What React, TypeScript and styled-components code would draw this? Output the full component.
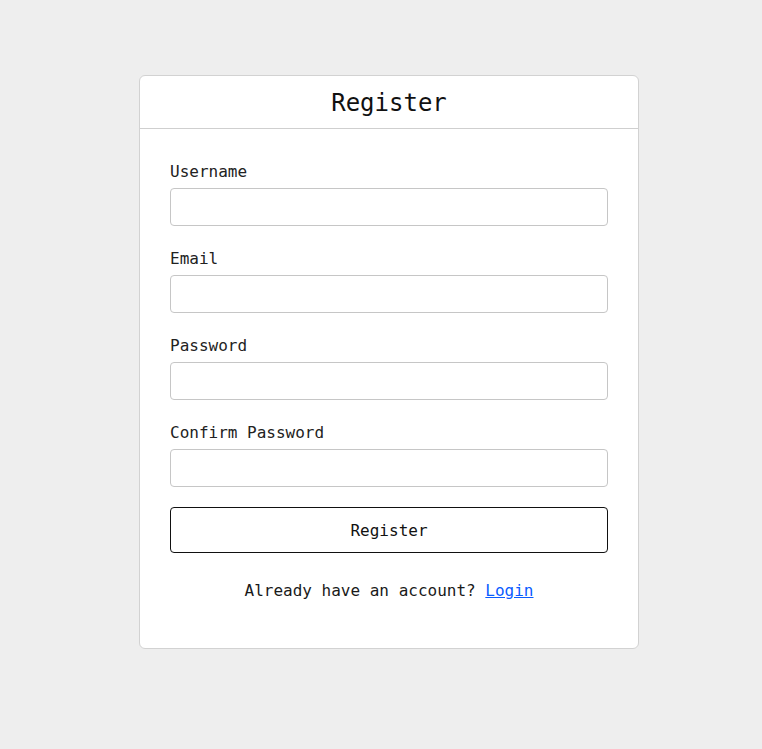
import React from "react";
import styled, { createGlobalStyle } from "styled-components";

const Global = createGlobalStyle`
  html, body { margin: 0; padding: 0; background: #eeeeee; }
  body { font-family: "DejaVu Sans Mono", "Liberation Mono", monospace; color: #1a1a1a; }
  * { box-sizing: border-box; }
`;

const Page = styled.div`
  min-height: 749px;
  display: flex;
  justify-content: center;
  align-items: flex-start;
  padding: 75px 0 0 16px;
`;

const Card = styled.div`
  width: 500px;
  background: #ffffff;
  border: 1px solid #d2d2d2;
  border-radius: 6px;
`;

const Header = styled.div`
  height: 53px;
  padding-top: 2px;
  border-bottom: 1px solid #cfcfcf;
  display: flex;
  align-items: center;
  justify-content: center;
`;

const Title = styled.h1`
  margin: 0;
  font-size: 24px;
  font-weight: 400;
  color: #111;
`;

const Body = styled.form`
  padding: 30px 30px 45px;
  display: flex;
  flex-direction: column;
`;

const Field = styled.div`
  display: flex;
  flex-direction: column;
  margin-bottom: 20px;
`;

const Label = styled.label`
  font-size: 16px;
  line-height: 24px;
  padding-top: 1px;
  color: #222;
  margin-bottom: 4px;
`;

const Input = styled.input`
  height: 38px;
  width: 100%;
  border: 1px solid #c6c6c6;
  border-radius: 4px;
  background: #fff;
  font-family: inherit;
  font-size: 16px;
  padding: 0 10px;
  outline: none;
`;

const Button = styled.button`
  height: 46px;
  width: 100%;
  background: #fff;
  border: 1px solid #111;
  border-radius: 4px;
  font-family: inherit;
  font-size: 16px;
  color: #111;
  cursor: pointer;
`;

const Footer = styled.p`
  margin: 26px 0 0;
  text-align: center;
  font-size: 16px;
  line-height: 24px;
  color: #1a1a1a;
`;

const Link = styled.a`
  color: #0a5cff;
  text-decoration: underline;
`;

const fields = ["Username", "Email", "Password", "Confirm Password"];

export default function App() {
  return (
    <>
      <Global />
      <Page>
        <Card>
          <Header>
            <Title>Register</Title>
          </Header>
          <Body onSubmit={(e) => e.preventDefault()}>
            {fields.map((f) => (
              <Field key={f}>
                <Label>{f}</Label>
                <Input type={f.includes("Password") ? "password" : f === "Email" ? "email" : "text"} />
              </Field>
            ))}
            <Button type="submit">Register</Button>
            <Footer>
              Already have an account? <Link href="#">Login</Link>
            </Footer>
          </Body>
        </Card>
      </Page>
    </>
  );
}
